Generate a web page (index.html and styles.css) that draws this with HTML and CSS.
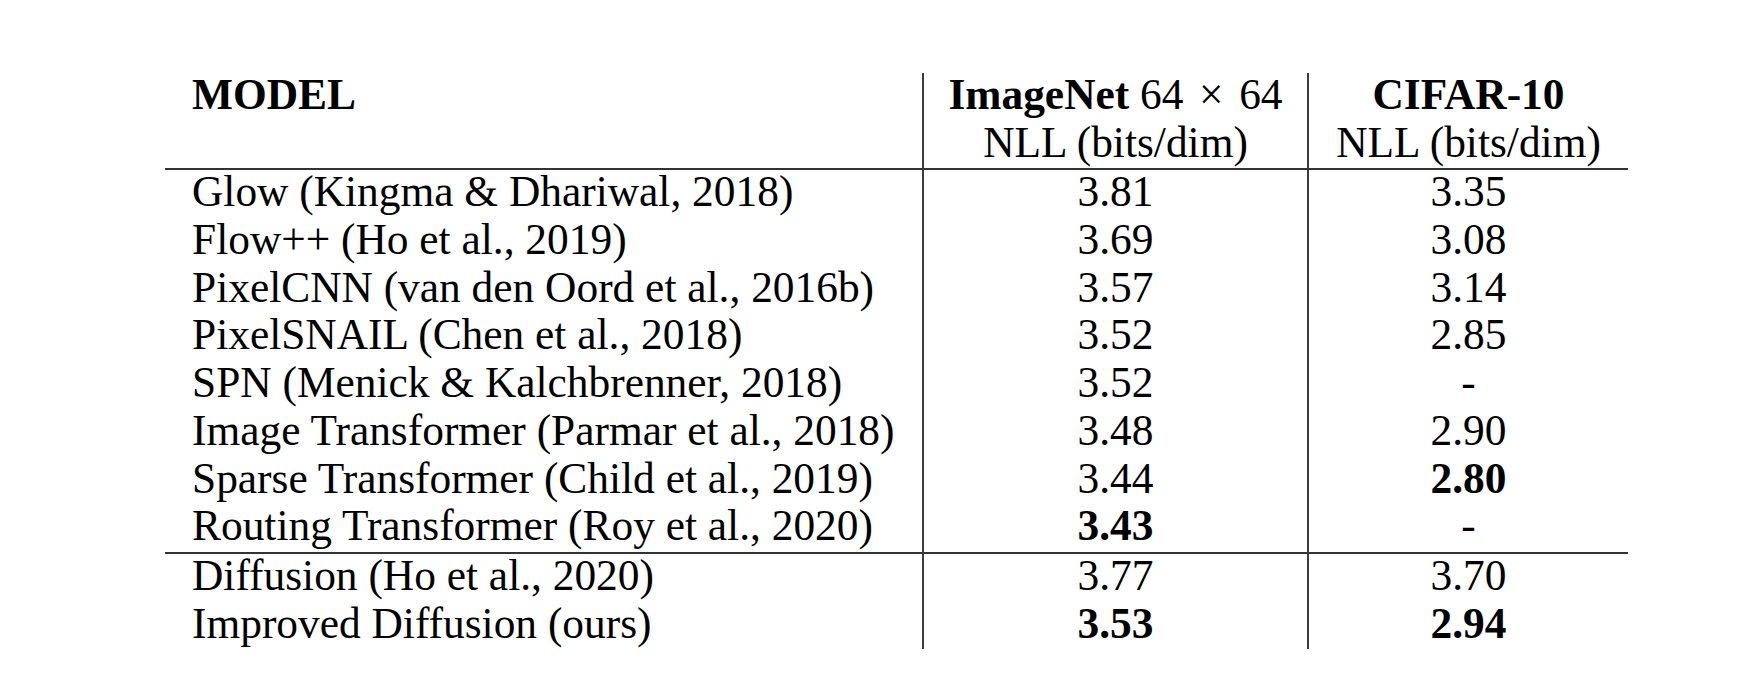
FILE: index.html
```html
<!DOCTYPE html>
<html lang="en">
<head>
<meta charset="utf-8">
<title>NLL comparison table</title>
<link rel="stylesheet" href="styles.css">
</head>
<body>
<div class="page">
  <table class="results">
    <colgroup>
      <col class="c-model">
      <col class="c-imagenet">
      <col class="c-cifar">
    </colgroup>
    <thead>
      <tr>
        <th class="model">MODEL</th>
        <th class="num"><b>ImageNet</b> 64<span class="times">×</span>64</th>
        <th class="num"><b>CIFAR-10</b></th>
      </tr>
      <tr class="sub">
        <th class="model"></th>
        <th class="num">NLL (bits/dim)</th>
        <th class="num">NLL (bits/dim)</th>
      </tr>
    </thead>
    <tbody>
      <tr><td class="model">Glow (Kingma &amp; Dhariwal, 2018)</td><td class="num">3.81</td><td class="num">3.35</td></tr>
      <tr><td class="model">Flow++ (Ho et al., 2019)</td><td class="num">3.69</td><td class="num">3.08</td></tr>
      <tr><td class="model">PixelCNN (van den Oord et al., 2016b)</td><td class="num">3.57</td><td class="num">3.14</td></tr>
      <tr><td class="model">PixelSNAIL (Chen et al., 2018)</td><td class="num">3.52</td><td class="num">2.85</td></tr>
      <tr><td class="model">SPN (Menick &amp; Kalchbrenner, 2018)</td><td class="num">3.52</td><td class="num">-</td></tr>
      <tr><td class="model">Image Transformer (Parmar et al., 2018)</td><td class="num">3.48</td><td class="num">2.90</td></tr>
      <tr><td class="model">Sparse Transformer (Child et al., 2019)</td><td class="num">3.44</td><td class="num best">2.80</td></tr>
      <tr><td class="model">Routing Transformer (Roy et al., 2020)</td><td class="num best">3.43</td><td class="num">-</td></tr>
      <tr class="sep"><td class="model">Diffusion (Ho et al., 2020)</td><td class="num">3.77</td><td class="num">3.70</td></tr>
      <tr><td class="model">Improved Diffusion (ours)</td><td class="num best">3.53</td><td class="num best">2.94</td></tr>
    </tbody>
  </table>
</div>
</body>
</html>
```

FILE: styles.css
```css
html, body {
  margin: 0;
  padding: 0;
  background: #ffffff;
}

.page {
  padding: 73px 0 0 165px;
  font-family: "Liberation Serif", "Times New Roman", serif;
  font-size: 43.4px;
  color: #000;
}

.results {
  border-collapse: collapse;
  table-layout: fixed;
  width: 1463px;
}

.c-model { width: 758px; }
.c-imagenet { width: 385px; }
.c-cifar { width: 320px; }

.results th,
.results td {
  font-weight: normal;
  line-height: 42px;
  padding: 0 0 5.7px;
  vertical-align: top;
  white-space: nowrap;
}

.results th b,
.results td.best {
  font-weight: bold;
}

.results th.model {
  font-weight: bold;
}

.results .model {
  text-align: left;
  padding-left: 27px;
}

.results .num {
  text-align: center;
  border-left: 2px solid #3c3c3c;
}

.results .times {
  margin: 0 0.36em;
}

.results tr.sub th {
  border-bottom: 2px solid #333;
}

.results tr.sep td {
  border-top: 2px solid #333;
}
```
